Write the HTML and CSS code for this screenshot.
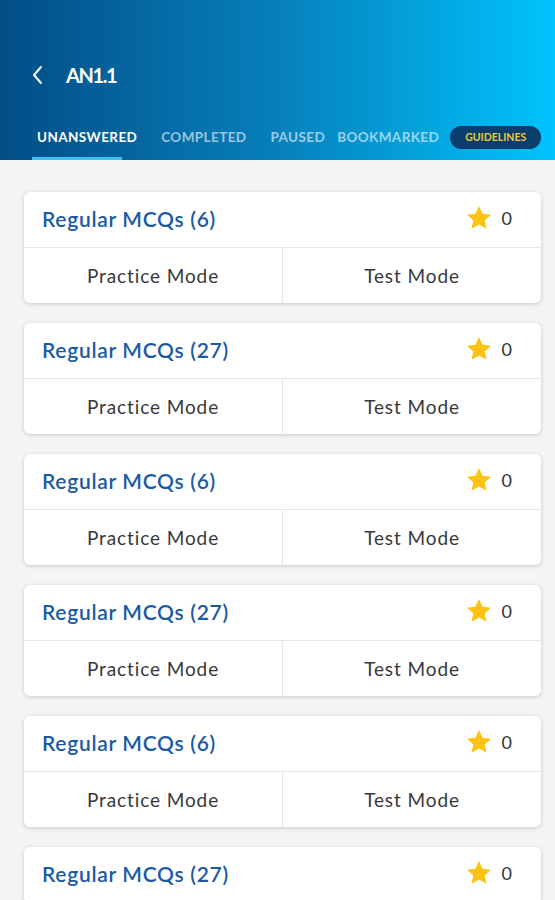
FILE: index.html
```html
<!DOCTYPE html>
<html lang="en">
<head>
    <meta charset="UTF-8">
    <meta name="viewport" content="width=device-width, initial-scale=1.0">
    <title>AN1.1</title>
    <link rel="stylesheet" href="styles.css">
</head>
<body>
    <div class="header">
        <div class="toolbar">
            <svg class="back" width="14" height="20" viewBox="0 0 14 20">
                <path d="M10 2 L3 10 L10 18" fill="none" stroke="white" stroke-width="2" stroke-linecap="round" stroke-linejoin="round"/>
            </svg>
            <span class="title">AN1.1</span>
        </div>
        <div class="tabs">
            <span class="tab tab-active">UNANSWERED</span>
            <span class="tab">COMPLETED</span>
            <span class="tab">PAUSED</span>
            <span class="tab tab-tight">BOOKMARKED</span>
            <span class="pill">GUIDELINES</span>
        </div>
    </div>

    <div class="list">
        <div class="card">
            <div class="card-head">
                <span class="card-title">Regular MCQs (6)</span>
                <span class="count"><svg class="star" viewBox="0 0 24 24"><path d="M12 1.8l3.1 6.6 7.2.8-5.4 4.9 1.5 7.1L12 17.6l-6.4 3.6 1.5-7.1L1.7 9.2l7.2-.8z"/></svg>0</span>
            </div>
            <div class="modes">
                <span class="mode">Practice Mode</span>
                <span class="mode">Test Mode</span>
            </div>
        </div>
        <div class="card">
            <div class="card-head">
                <span class="card-title">Regular MCQs (27)</span>
                <span class="count"><svg class="star" viewBox="0 0 24 24"><path d="M12 1.8l3.1 6.6 7.2.8-5.4 4.9 1.5 7.1L12 17.6l-6.4 3.6 1.5-7.1L1.7 9.2l7.2-.8z"/></svg>0</span>
            </div>
            <div class="modes">
                <span class="mode">Practice Mode</span>
                <span class="mode">Test Mode</span>
            </div>
        </div>
        <div class="card">
            <div class="card-head">
                <span class="card-title">Regular MCQs (6)</span>
                <span class="count"><svg class="star" viewBox="0 0 24 24"><path d="M12 1.8l3.1 6.6 7.2.8-5.4 4.9 1.5 7.1L12 17.6l-6.4 3.6 1.5-7.1L1.7 9.2l7.2-.8z"/></svg>0</span>
            </div>
            <div class="modes">
                <span class="mode">Practice Mode</span>
                <span class="mode">Test Mode</span>
            </div>
        </div>
        <div class="card">
            <div class="card-head">
                <span class="card-title">Regular MCQs (27)</span>
                <span class="count"><svg class="star" viewBox="0 0 24 24"><path d="M12 1.8l3.1 6.6 7.2.8-5.4 4.9 1.5 7.1L12 17.6l-6.4 3.6 1.5-7.1L1.7 9.2l7.2-.8z"/></svg>0</span>
            </div>
            <div class="modes">
                <span class="mode">Practice Mode</span>
                <span class="mode">Test Mode</span>
            </div>
        </div>
        <div class="card">
            <div class="card-head">
                <span class="card-title">Regular MCQs (6)</span>
                <span class="count"><svg class="star" viewBox="0 0 24 24"><path d="M12 1.8l3.1 6.6 7.2.8-5.4 4.9 1.5 7.1L12 17.6l-6.4 3.6 1.5-7.1L1.7 9.2l7.2-.8z"/></svg>0</span>
            </div>
            <div class="modes">
                <span class="mode">Practice Mode</span>
                <span class="mode">Test Mode</span>
            </div>
        </div>
        <div class="card">
            <div class="card-head">
                <span class="card-title">Regular MCQs (27)</span>
                <span class="count"><svg class="star" viewBox="0 0 24 24"><path d="M12 1.8l3.1 6.6 7.2.8-5.4 4.9 1.5 7.1L12 17.6l-6.4 3.6 1.5-7.1L1.7 9.2l7.2-.8z"/></svg>0</span>
            </div>
        </div>
    </div>
</body>
</html>
```

FILE: styles.css
```css
body {
    margin: 0;
    font-family: Lato, "Open Sans", sans-serif;
    background: #f4f4f4;
    height: 900px;
    overflow: hidden;
}

.header {
    height: 160px;
    background: linear-gradient(to right, #034d86, #0680bb 50%, #01c3fd);
    color: white;
    display: flex;
    flex-direction: column;
}

.toolbar {
    margin-top: 55px;
    height: 40px;
    display: flex;
    align-items: center;
    padding-left: 31px;
}

.back {
    margin-right: 21px;
}

.title {
    font-size: 20px;
    font-weight: bold;
    letter-spacing: -1.4px;
}

.tabs {
    margin-top: 19px;
    height: 46px;
    display: flex;
    align-items: center;
    padding-left: 25px;
}

.tab {
    position: relative;
    padding: 0 12px;
    font-size: 13.5px;
    font-weight: bold;
    letter-spacing: 0.4px;
    color: rgba(255, 255, 255, 0.6);
    line-height: 46px;
}

.tab-active {
    color: white;
}

.tab-active::after {
    content: "";
    position: absolute;
    left: 7px;
    width: 90px;
    bottom: 0;
    height: 3px;
    background: #39c3f2;
}

.tab-tight {
    padding: 0 11px 0 0;
}

.pill {
    background: #0a3e6d;
    color: #ebc744;
    font-size: 10.5px;
    font-weight: bold;
    height: 23px;
    width: 91px;
    border-radius: 12px;
    display: flex;
    align-items: center;
    justify-content: center;
}

.list {
    padding: 32px 14px 0 24px;
    display: flex;
    flex-direction: column;
    gap: 20px;
}

.card {
    background: white;
    border-radius: 6px;
    box-shadow: 0 1px 4px rgba(0, 0, 0, 0.18);
}

.card-head {
    height: 56px;
    box-sizing: border-box;
    display: flex;
    align-items: center;
    justify-content: space-between;
    padding: 0 29px 3px 18px;
    border-bottom: 1px solid #e6e6e6;
}

.card-title {
    color: #1a5aa5;
    font-size: 21px;
    font-weight: 600;
    letter-spacing: 0.7px;
}

.count {
    display: flex;
    align-items: center;
    font-size: 18px;
    color: #333;
}

.star {
    width: 28px;
    height: 28px;
    fill: #fcc314;
    margin-right: 9px;
}

.modes {
    height: 55px;
    display: flex;
}

.mode {
    flex: 1;
    display: flex;
    align-items: center;
    justify-content: center;
    font-size: 19px;
    letter-spacing: 0.9px;
    color: #383838;
}

.mode + .mode {
    border-left: 1px solid #e6e6e6;
}
```
